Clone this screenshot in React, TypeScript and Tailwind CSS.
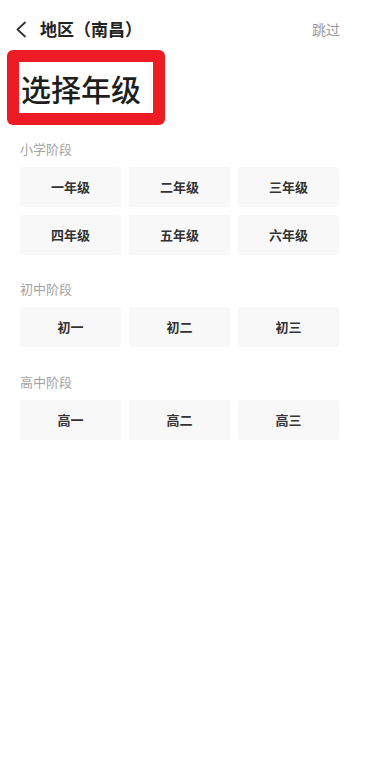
import React from 'react';

const SECTIONS = [
  { title: '小学阶段', grades: ['一年级', '二年级', '三年级', '四年级', '五年级', '六年级'], mt: 'mt-[15px]' },
  { title: '初中阶段', grades: ['初一', '初二', '初三'], mt: 'mt-[25px]' },
  { title: '高中阶段', grades: ['高一', '高二', '高三'], mt: 'mt-[26px]' },
];

const App: React.FC = () => {
  return (
    <div
      className="w-[373px] min-h-[764px] bg-white text-[#333]"
      style={{ fontFamily: '"Noto Sans CJK SC", "Noto Sans", sans-serif' }}
    >
      {/* Header */}
      <div className="flex items-center justify-between pt-[19px] pl-[15px] pr-[33px] h-[39px]">
        <div className="flex items-center">
          <svg width="12" height="17" viewBox="0 0 12 17" fill="none" className="mr-[13px]">
            <path d="M10 1.5L2.5 8.5L10 15.5" stroke="#333" strokeWidth="1.8" strokeLinecap="round" strokeLinejoin="round" />
          </svg>
          <span className="text-[17px] leading-[20px] font-bold text-[#222]">地区（南昌）</span>
        </div>
        <span className="text-[14px] leading-[20px] text-[#9a9a9a]">跳过</span>
      </div>

      {/* Highlighted title */}
      <div className="mt-[11px] ml-[7px] w-[158px] h-[75px] rounded-[6px] bg-[#ed1c24] p-[12px]">
        <div className="h-full bg-white flex items-center pl-[2px]">
          <span className="text-[30px] leading-none font-medium text-[#1e1e1e]">选择年级</span>
        </div>
      </div>

      {SECTIONS.map((s) => (
        <div key={s.title} className="pl-5">
          <div className={`${s.mt} text-[13px] leading-[18px] text-[#a3a3a3]`}>{s.title}</div>
          <div className="mt-[9px] grid grid-cols-[101px_101px_101px] gap-2">
            {s.grades.map((g) => (
              <div
                key={g}
                className="h-[40px] bg-[#f8f8f8] rounded-[2px] flex items-center justify-center text-[13px] font-semibold text-[#333]"
              >
                {g}
              </div>
            ))}
          </div>
        </div>
      ))}
    </div>
  );
};

export default App;
